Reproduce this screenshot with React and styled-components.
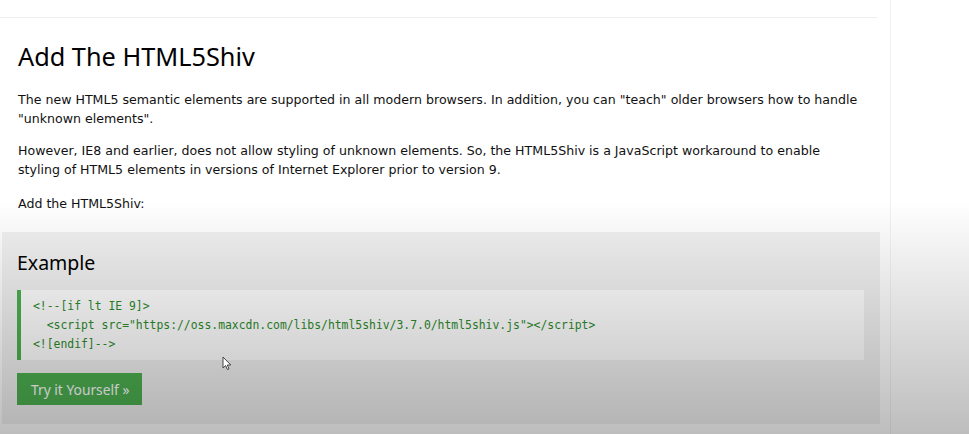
import React from 'react';
import styled, { createGlobalStyle } from 'styled-components';

const GlobalStyle = createGlobalStyle`
  html, body {
    margin: 0;
    padding: 0;
    background: #fff;
  }
  body {
    width: 969px;
    height: 434px;
    overflow: hidden;
  }
`

const Page = styled.div`
  position: relative;
  display: flex;
  width: 969px;
  height: 434px;
  overflow: hidden;
  background: #fff;
`

const Main = styled.main`
  width: 891px;
  flex-shrink: 0;
  border-right: 1px solid #f2f2f2;
  box-sizing: border-box;
  padding-top: 17px;
`

const Rule = styled.hr`
  margin: 0;
  width: 877px;
  border: none;
  border-top: 1px solid #eeeeee;
`

const Content = styled.section`
  padding: 0 28px 0 18px;
  font-family: "DejaVu Sans", Verdana, sans-serif;
  font-size: 12.6px;
  line-height: 19px;
  color: #111;
`

const Title = styled.h1`
  margin: 21px 0 0;
  font-family: "Noto Sans", "Open Sans", sans-serif;
  font-weight: 400;
  font-size: 25.3px;
  line-height: 34px;
  color: #000;
`

const Para = styled.p`
  margin: ${p => p.gap}px 0 0;
`

const ExampleBox = styled.section`
  margin: 19px 10px 0 2px;
  padding: 15px 16px 18px 15px;
  background: #f1f1f1;
  height: 192px;
  box-sizing: border-box;
`

const ExampleTitle = styled.h2`
  margin: 0;
  font-family: "Noto Sans", "Open Sans", sans-serif;
  font-weight: 400;
  font-size: 19.5px;
  line-height: 32px;
  color: #000;
`

const Code = styled.pre`
  margin: 11px 0 0;
  padding: 7px 0 6px 12px;
  background: #ffffff;
  border-left: 4px solid #4caf50;
  font-family: "DejaVu Sans Mono", "Liberation Mono", monospace;
  font-size: 11.4px;
  line-height: 19px;
  color: #2c8a2c;
`

const TryButton = styled.a`
  display: inline-flex;
  align-items: center;
  margin-top: 13px;
  height: 32px;
  padding: 0 13px 0 14px;
  background: #4caf50;
  color: #fff;
  font-family: "Noto Sans", "Open Sans", sans-serif;
  font-size: 13.8px;
  text-decoration: none;
`

const Sidebar = styled.aside`
  flex: 1;
  background: #fff;
`

/* video-player shading over the lower half of the frame */
const Shade = styled.div`
  position: absolute;
  left: 0;
  right: 0;
  top: 200px;
  bottom: 0;
  pointer-events: none;
  background: linear-gradient(to bottom, rgba(0,0,0,0) 0%, rgba(0,0,0,0.26) 100%);
`

const Cursor = styled.svg`
  position: absolute;
  left: 222px;
  top: 356px;
`

export default function App() {
  return (
    <Page>
      <GlobalStyle />
      <Main>
        <Rule />
        <Content>
          <Title>Add The HTML5Shiv</Title>
          <Para gap={17}>
            The new HTML5 semantic elements are supported in all modern browsers. In addition, you can "teach" older browsers how to handle "unknown elements".
          </Para>
          <Para gap={13}>
            However, IE8 and earlier, does not allow styling of unknown elements. So, the HTML5Shiv is a JavaScript workaround to enable styling of HTML5 elements in versions of Internet Explorer prior to version 9.
          </Para>
          <Para gap={15}>Add the HTML5Shiv:</Para>
        </Content>
        <ExampleBox>
          <ExampleTitle>Example</ExampleTitle>
          <Code>{`<!--[if lt IE 9]>
  <script src="https://oss.maxcdn.com/libs/html5shiv/3.7.0/html5shiv.js"></script>
<![endif]-->`}</Code>
          <TryButton href="#">Try it Yourself »</TryButton>
        </ExampleBox>
      </Main>
      <Sidebar />
      <Shade />
      <Cursor width="10" height="16" viewBox="0 0 10 16">
        <path d="M1 1 L1 12 L3.6 9.6 L5.4 13.6 L7 12.9 L5.3 9 L8.8 9 Z" fill="#fff" stroke="#333" strokeWidth="0.9" strokeLinejoin="round" />
      </Cursor>
    </Page>
  );
}
